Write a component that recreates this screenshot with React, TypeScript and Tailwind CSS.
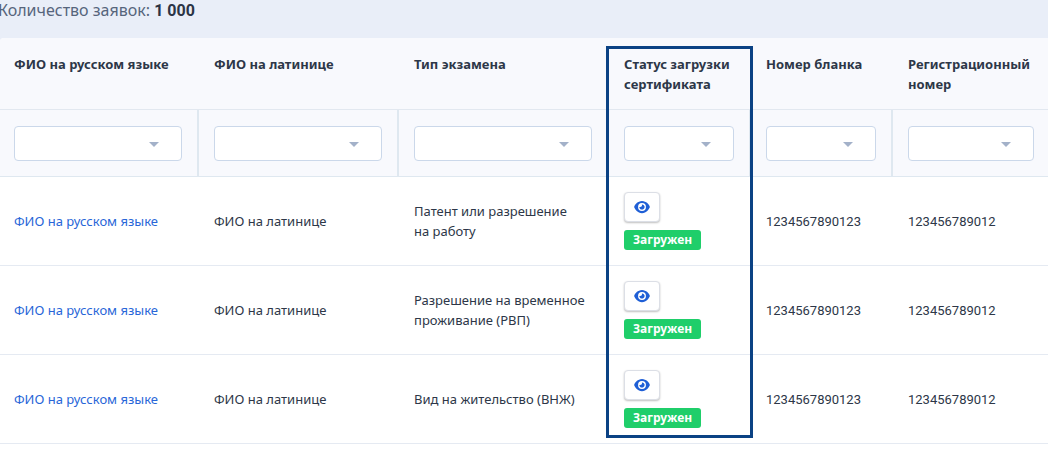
import React from 'react';

type Exam = { id: number; examType: string };

const columns: string[] = [
  'ФИО на русском языке',
  'ФИО на латинице',
  'Тип экзамена',
  'Статус загрузки сертификата',
  'Номер бланка',
  'Регистрационный номер',
];

const rows: Exam[] = [
  { id: 1, examType: 'Патент или разрешение на\u00a0работу' },
  { id: 2, examType: 'Разрешение на временное проживание (РВП)' },
  { id: 3, examType: 'Вид на жительство (ВНЖ)' },
];

const STATUS_COLUMN = 3;

function EyeIcon() {
  return (
    <svg viewBox="0 0 576 512" className="h-[14px] w-4" fill="currentColor" aria-hidden="true">
      <path d="M288 32c-80.8 0-145.5 36.8-192.6 80.6C48.6 156 17.3 208 2.5 243.7c-3.3 7.9-3.3 16.7 0 24.6C17.3 304 48.6 356 95.4 399.4C142.5 443.2 207.2 480 288 480s145.5-36.8 192.6-80.6c46.8-43.5 78.1-95.4 93-131.1c3.3-7.9 3.3-16.7 0-24.6c-14.9-35.7-46.2-87.7-93-131.1C433.5 68.8 368.8 32 288 32zM144 256a144 144 0 1 1 288 0 144 144 0 1 1 -288 0zm144-64c0 35.3-28.7 64-64 64c-7.1 0-13.9-1.2-20.3-3.3c-5.5-1.8-11.9 1.6-11.7 7.4c.3 6.9 1.3 13.8 3.2 20.7c13.7 51.2 66.4 81.6 117.6 67.9s81.6-66.4 67.9-117.6c-11.1-41.5-47.8-69.4-88.6-71.1c-5.8-.2-9.2 6.1-7.4 11.7c2.1 6.4 3.3 13.2 3.3 20.3z" />
    </svg>
  );
}

function FilterSelect({ label }: { label: string }) {
  return (
    <div className="relative">
      <select
        aria-label={label}
        className="block h-[35px] w-full appearance-none rounded-[4px] border border-[#cbd8ea] bg-white px-3 pr-9 text-[13px] outline-none focus:border-[#2563d9]"
      >
        <option value="" />
      </select>
      <svg
        viewBox="0 0 10 5"
        className="pointer-events-none absolute top-4 right-[23px] h-[5px] w-[10px] fill-[#a3b1c9]"
        aria-hidden="true"
      >
        <path d="M0 0h10L5 5z" />
      </svg>
    </div>
  );
}

export default function App() {
  return (
    <main className="bg-[#e9eef8] font-['Noto_Sans',sans-serif] text-[13px] leading-5 text-[#2d3748]">
      <p className="-ml-0.5 h-[38px] text-[16px] leading-5 text-[#56657c]">
        Количество заявок:{' '}
        <strong className="font-['Roboto',sans-serif] font-bold text-[#2b3445]">1 000</strong>
      </p>

      <div className="rounded-tl-[4px] bg-white">
        <table className="w-full table-fixed border-separate border-spacing-0 text-left">
          <colgroup>
            <col className="w-[198px]" />
            <col className="w-[200px]" />
            <col className="w-[210px]" />
            <col className="w-[142px]" />
            <col className="w-[142px]" />
            <col className="w-[156px]" />
          </colgroup>
          <thead className="bg-[#f8f9fd]">
            <tr>
              {columns.map((name, i) => (
                <th
                  key={name}
                  scope="col"
                  className="relative border-b border-[#e2e8f0] px-4 pt-4 pb-[15px] align-top font-bold first:rounded-tl-[4px] first:pl-[14px] last:pr-[14px]"
                >
                  {name}
                  {i === STATUS_COLUMN && (
                    <span className="pointer-events-none absolute top-2 -right-[3px] -left-0.5 z-10 h-[392px] border-3 border-[#0b4284]" />
                  )}
                </th>
              ))}
            </tr>
            <tr>
              {columns.map((name) => (
                <td
                  key={name}
                  className="border-x border-b border-[#dfe8f0] px-[15px] pt-4 pb-[15px] first:border-l-0 first:pl-[14px] last:border-r-0 last:pr-[14px]"
                >
                  <FilterSelect label={name} />
                </td>
              ))}
            </tr>
          </thead>
          <tbody className="[&_td]:border-b [&_td]:border-[#e5eaf2] [&_td]:px-4 [&_td]:py-[15px]">
            {rows.map((row) => (
              <tr key={row.id}>
                <td className="pl-[14px]!">
                  <a href="#applicant" className="text-[#2866d8]">
                    ФИО на русском языке
                  </a>
                </td>
                <td>ФИО на латинице</td>
                <td>{row.examType}</td>
                <td>
                  <div className="flex flex-col items-start gap-2">
                    <button
                      type="button"
                      aria-label="Просмотреть сертификат"
                      className="flex h-[30px] w-9 items-center justify-center rounded-[4px] border border-[#dcdfe6] bg-white text-[#1f5fd6] shadow-[0_1px_2px_rgba(0,0,0,0.25)]"
                    >
                      <EyeIcon />
                    </button>
                    <span className="rounded-[3px] bg-[#1fce6a] px-[9px] text-[12px] leading-5 font-bold text-white">
                      Загружен
                    </span>
                  </div>
                </td>
                <td>
                  <span className="font-['Roboto',sans-serif]">1234567890123</span>
                </td>
                <td>
                  <span className="font-['Roboto',sans-serif]">123456789012</span>
                </td>
              </tr>
            ))}
          </tbody>
        </table>
        <div className="h-[5px]" />
      </div>
    </main>
  );
}
